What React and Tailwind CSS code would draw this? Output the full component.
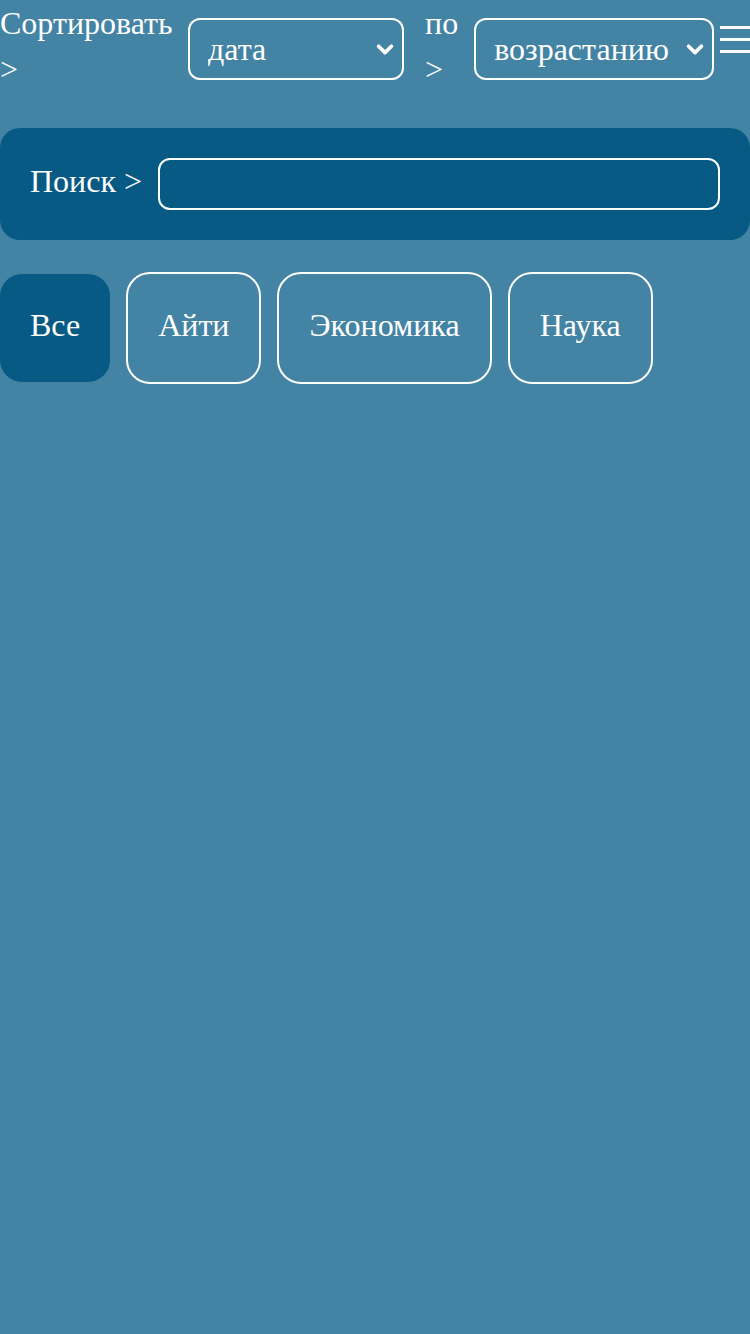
const categories = ['Все', 'Айти', 'Экономика', 'Наука'];

const Chevron = () => (
  <svg className="pointer-events-none absolute right-[8px] top-1/2 -translate-y-1/2" width="22" height="22" viewBox="0 0 24 24" fill="none">
    <path d="M5 9l7 7 7-7" stroke="white" strokeWidth="4" strokeLinecap="round" strokeLinejoin="round" />
  </svg>
);

const Select = ({ width, value, options }) => (
  <div className="relative shrink-0 translate-y-[3px]" style={{ width }}>
    <select
      defaultValue={value}
      className="h-[62px] w-full appearance-none rounded-[12px] border-2 border-white bg-transparent pl-[18px] pr-[36px] text-[32px] text-white outline-none"
    >
      {options.map((o) => (
        <option key={o} value={o} className="text-black">
          {o}
        </option>
      ))}
    </select>
    <Chevron />
  </div>
);

export default function App() {
  const active = 'Все';
  return (
    <div
      className="min-h-[1334px] w-[750px] overflow-hidden bg-[#4383a4] text-white"
      style={{ fontFamily: '"Liberation Serif", "Times New Roman", serif' }}
    >
      <div className="flex items-center gap-4 whitespace-nowrap text-[32px] leading-[46px]">
        <div className="w-[172px]">
          Сортировать
          <br />
          &gt;
        </div>
        <Select width={216} value="дата" options={['дата', 'название']} />
        <div className="ml-[5px] w-[34px]">
          по
          <br />
          &gt;
        </div>
        <Select width={240} value="возрастанию" options={['возрастанию', 'убыванию']} />
        <div className="-ml-[10px] flex shrink-0 flex-col gap-[9px] pb-[14px]">
          <span className="block h-[3px] w-[36px] bg-white" />
          <span className="block h-[3px] w-[36px] bg-white" />
          <span className="block h-[3px] w-[36px] bg-white" />
        </div>
      </div>

      <div className="mt-[36px] flex items-center gap-4 rounded-[20px] bg-[#065a84] p-[30px] text-[32px]">
        <span className="-translate-y-[3px] whitespace-nowrap">Поиск &gt;</span>
        <input
          type="text"
          className="h-[52px] flex-1 rounded-[12px] border-2 border-white bg-transparent px-3 text-[32px] text-white outline-none"
        />
      </div>

      <div className="mt-[32px] flex items-center gap-4">
        {categories.map((c) =>
          c === active ? (
            <button key={c} className="h-[108px] rounded-[22px] bg-[#065a84] px-[30px] pb-[6px] text-[32px] text-white">
              {c}
            </button>
          ) : (
            <button key={c} className="h-[112px] rounded-[24px] border-2 border-white px-[30px] pb-[6px] text-[32px] text-white">
              {c}
            </button>
          )
        )}
      </div>
    </div>
  );
}
